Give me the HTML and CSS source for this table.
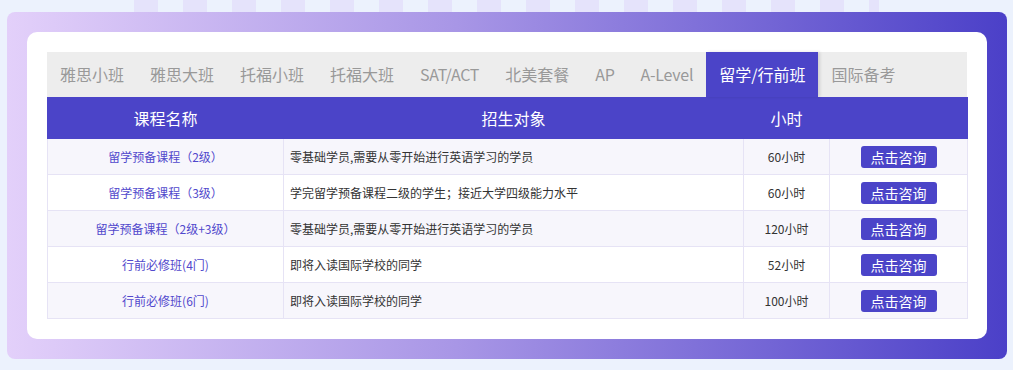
FILE: index.html
```html
<!DOCTYPE html>
<html lang="zh-CN">
<head>
<meta charset="utf-8">
<title>课程</title>
<link rel="stylesheet" href="styles.css">
</head>
<body>
<div class="strip"></div>
<div class="frame">
  <div class="card">
    <div class="tabs">
      <span class="tab">雅思小班</span>
      <span class="tab">雅思大班</span>
      <span class="tab">托福小班</span>
      <span class="tab">托福大班</span>
      <span class="tab latin">SAT/ACT</span>
      <span class="tab">北美套餐</span>
      <span class="tab latin">AP</span>
      <span class="tab latin">A-Level</span>
      <span class="tab active">留学/行前班</span>
      <span class="tab">国际备考</span>
    </div>
    <table class="courses">
      <colgroup>
        <col class="c1"><col class="c2"><col class="c3"><col class="c4">
      </colgroup>
      <thead>
        <tr><th>课程名称</th><th>招生对象</th><th>小时</th><th></th></tr>
      </thead>
      <tbody>
        <tr><td class="name">留学预备课程（2级）</td><td class="who">零基础学员,需要从零开始进行英语学习的学员</td><td class="hours">60小时</td><td class="act"><span class="btn">点击咨询</span></td></tr>
        <tr><td class="name">留学预备课程（3级）</td><td class="who">学完留学预备课程二级的学生；接近大学四级能力水平</td><td class="hours">60小时</td><td class="act"><span class="btn">点击咨询</span></td></tr>
        <tr><td class="name">留学预备课程（2级+3级）</td><td class="who">零基础学员,需要从零开始进行英语学习的学员</td><td class="hours">120小时</td><td class="act"><span class="btn">点击咨询</span></td></tr>
        <tr><td class="name">行前必修班(4门)</td><td class="who">即将入读国际学校的同学</td><td class="hours">52小时</td><td class="act"><span class="btn">点击咨询</span></td></tr>
        <tr><td class="name">行前必修班(6门)</td><td class="who">即将入读国际学校的同学</td><td class="hours">100小时</td><td class="act"><span class="btn">点击咨询</span></td></tr>
      </tbody>
    </table>
  </div>
</div>
</body>
</html>
```
FILE: styles.css
```css
* { box-sizing: border-box; }
html, body { margin: 0; padding: 0; }
body {
  background: #ecf2fd;
  font-family: "Noto Sans CJK SC", "Noto Sans", sans-serif;
  width: 1013px;
  height: 370px;
  overflow: hidden;
}
.strip {
  height: 12px;
  margin-left: 134px;
  width: 745px;
  background: repeating-linear-gradient(90deg, #e5e3fb 0 24px, transparent 24px 49px);
}
.frame {
  margin-left: 7px;
  width: 1000px;
  height: 347px;
  padding: 20px;
  border-radius: 8px;
  background: linear-gradient(90deg, #e3d0fa 0%, #a896e6 45%, #4b40c8 100%);
}
.card {
  background: #fff;
  border-radius: 10px;
  height: 307px;
  padding: 20px;
}
.tabs {
  display: flex;
  height: 45px;
  background: #ededed;
}
.tab {
  padding: 0 13px;
  line-height: 45px;
  font-size: 16px;
  color: #999;
  white-space: nowrap;
}
.tab.latin { letter-spacing: -0.25px; }
.tab.active {
  background: #4b44c8;
  color: #fff;
  box-shadow: 2px 0 3px rgba(0,0,0,0.12);
}
.courses {
  width: 920px;
  border-collapse: collapse;
  table-layout: fixed;
}
.c1 { width: 236px; }
.c2 { width: 460px; }
.c3 { width: 86px; }
.c4 { width: 138px; }
.courses th {
  background: #4b44c8;
  color: #fff;
  font-weight: normal;
  font-size: 16px;
  height: 41px;
  padding: 0;
  border: 1px solid #4b44c8;
}
.courses td {
  height: 36px;
  padding: 0;
  border: 1px solid #e6e3f5;
  font-size: 12px;
  color: #333;
}
.courses tbody tr:nth-child(odd) td { background: #f7f6fc; }
.courses tbody tr:nth-child(even) td { background: #fff; }
.name { text-align: center; color: #5148cc !important; }
.who { padding-left: 6px !important; }
.hours { text-align: center; }
.act { text-align: center; }
.btn {
  display: inline-block;
  width: 76px;
  height: 22px;
  line-height: 22px;
  background: #4b44c8;
  color: #fff;
  font-size: 14px;
  border-radius: 3px;
  vertical-align: middle;
}
```
